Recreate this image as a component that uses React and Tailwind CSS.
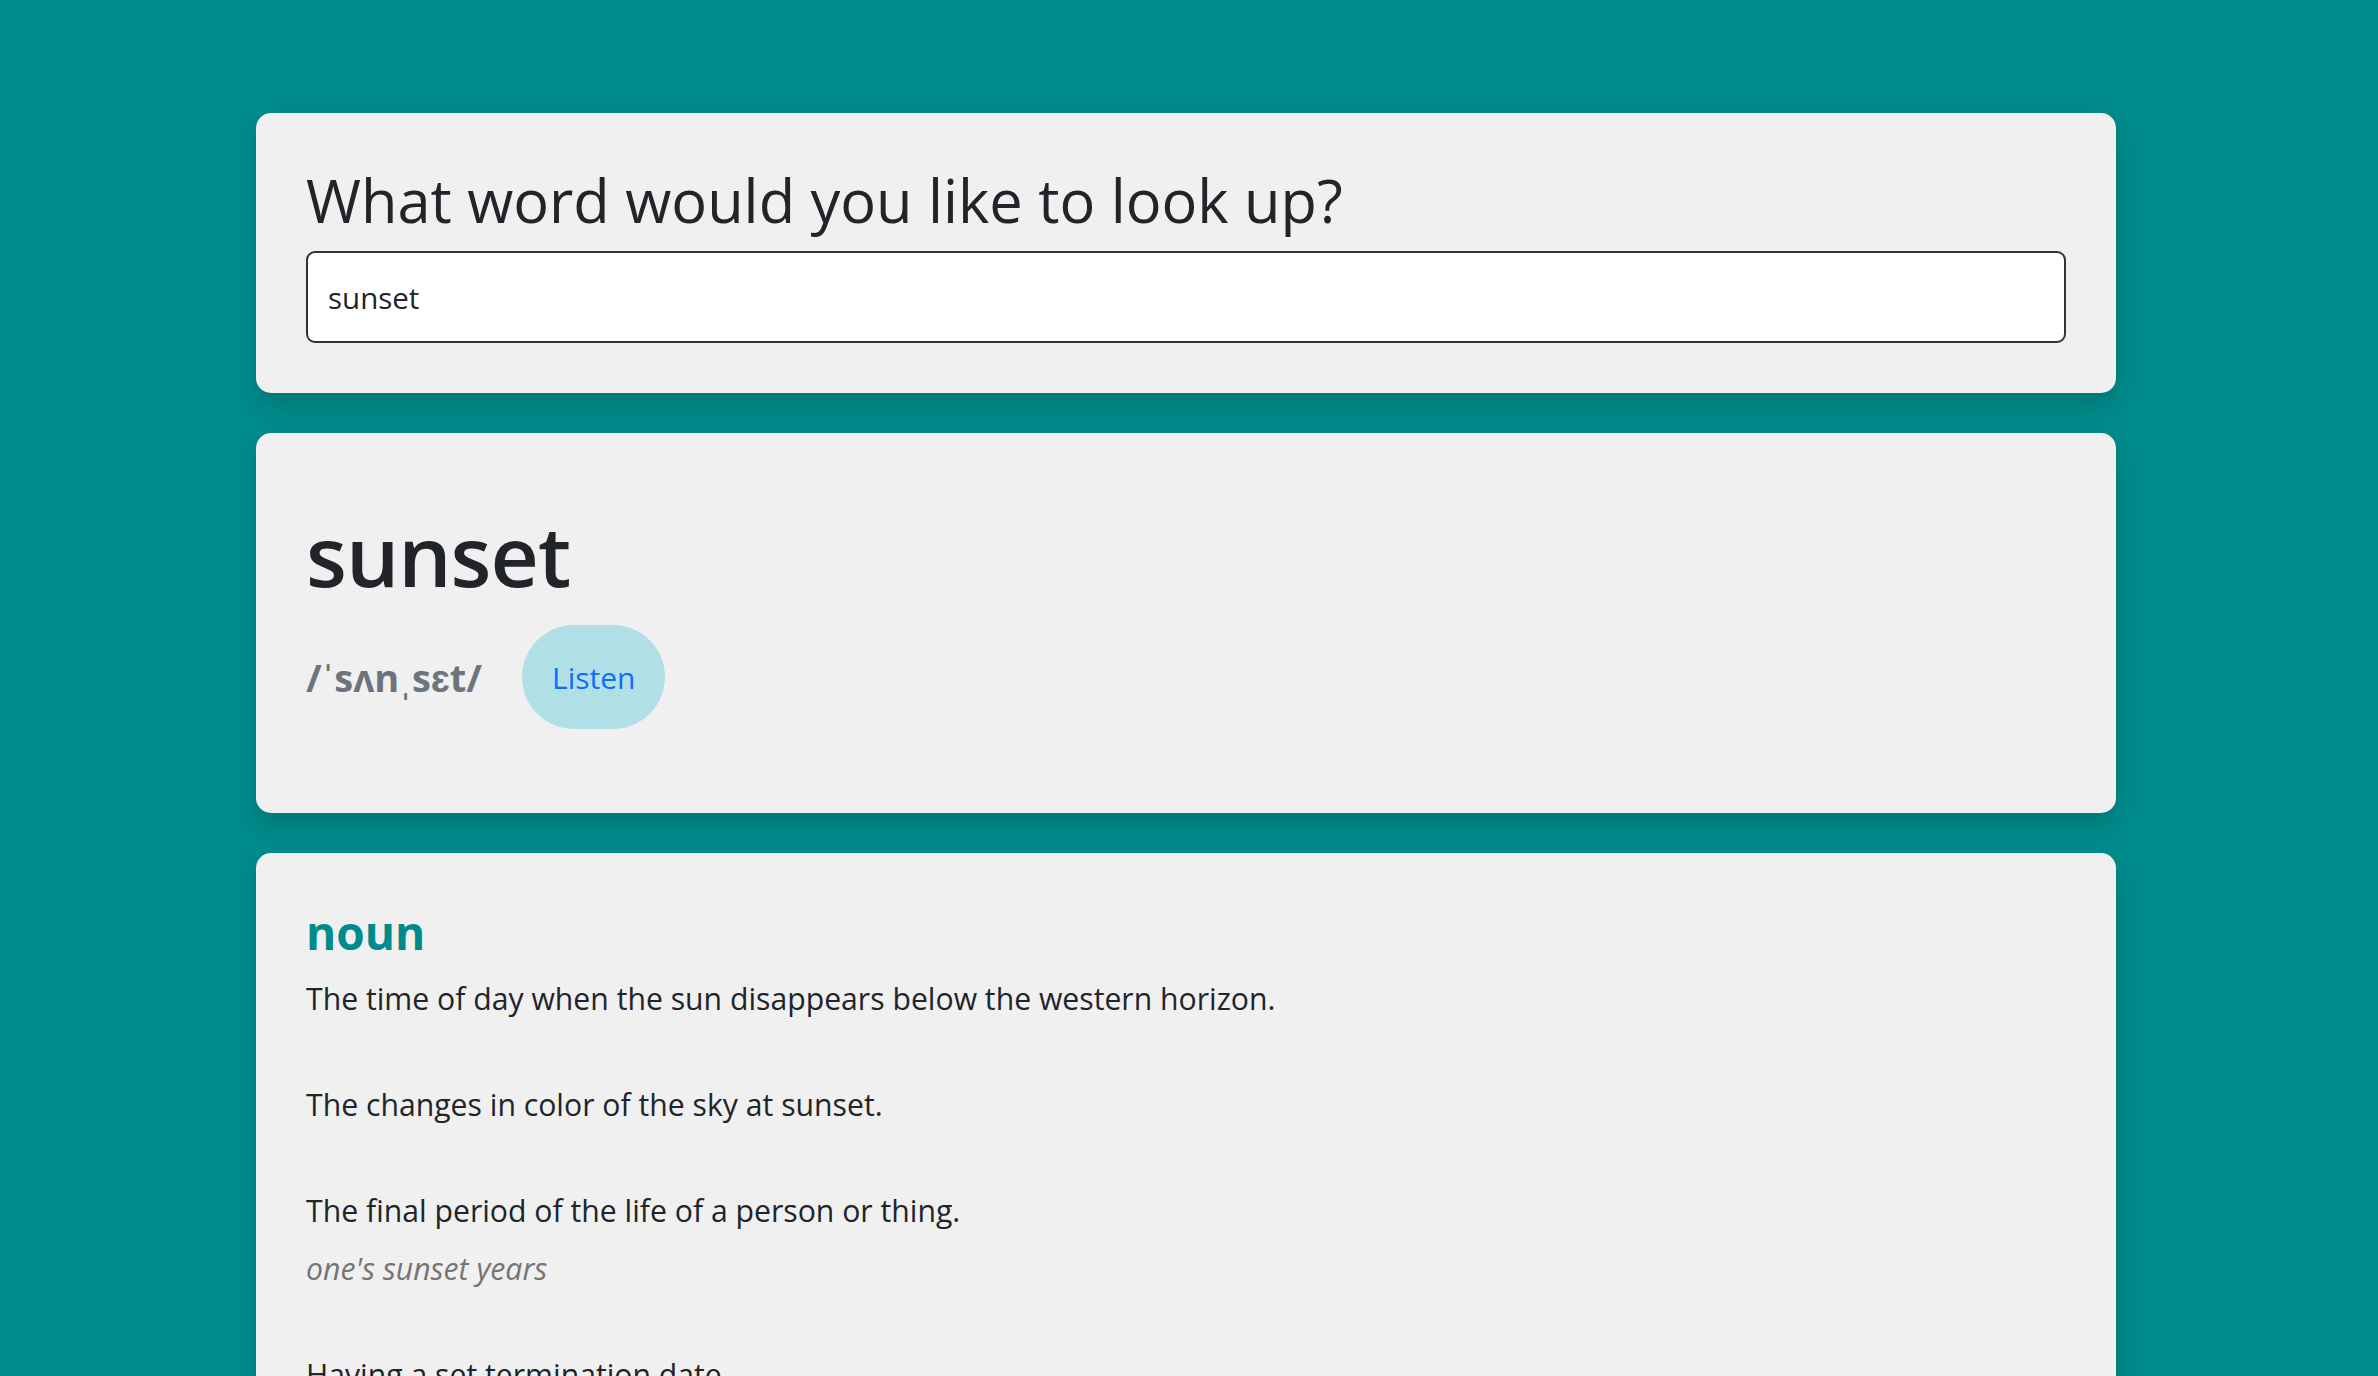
const definitions = [
  { text: 'The time of day when the sun disappears below the western horizon.' },
  { text: 'The changes in color of the sky at sunset.' },
  { text: 'The final period of the life of a person or thing.', example: "one's sunset years" },
  { text: 'Having a set termination date.' },
  { text: 'A provision of a law or regulation that causes it to expire at a set date.' },
]

function Card({ children, className = '' }) {
  return (
    <section className={`bg-[#f0f0f0] rounded-[15px] shadow-[0_12px_24px_rgba(0,0,0,0.15)] px-[50px] ${className}`}>
      {children}
    </section>
  )
}

export default function App() {
  return (
    <div className="min-h-screen bg-[#008b8b] pt-[113px] pb-[60px] text-[#212529] font-['Open_Sans',sans-serif]">
      <main className="ml-[256px] w-[1860px] flex flex-col gap-[40px]">
        {/* Search */}
        <Card className="pt-[51px] pb-[50px]">
          <h1 className="text-[59.5px] leading-[72px] font-medium mb-[15px]">
            What word would you like to look up?
          </h1>
          <input
            type="search"
            defaultValue="sunset"
            className="w-full h-[92px] bg-white border-2 border-[#333] rounded-[9px] px-[20px] text-[29.5px] text-[#212529] outline-none"
          />
        </Card>

        {/* Word header */}
        <Card className="pt-[50px] pb-[84px]">
          <h2 className="text-[84px] leading-[108px] font-semibold tracking-[-1px] mt-[18px]">sunset</h2>
          <div className="flex items-center gap-[40px] mt-[16px]">
            <span className="text-[38px] font-bold text-[#6c757d]">/ˈsʌnˌsɛt/</span>
            <button className="h-[104px] px-[30px] rounded-full bg-[#b0e0e6] text-[#0d6efd] text-[30px]">
              Listen
            </button>
          </div>
        </Card>

        {/* Meanings */}
        <Card className="pt-[50px] pb-[50px]">
          <h3 className="text-[46px] leading-[58px] font-bold text-[#008b8b] mb-[13px]">noun</h3>
          <div className="flex flex-col gap-[56px]">
            {definitions.map((d) => (
              <div key={d.text}>
                <p className="text-[30.2px] leading-[50px]">{d.text}</p>
                {d.example && (
                  <p className="text-[30.2px] leading-[50px] italic text-[#757575] mt-[8px]">{d.example}</p>
                )}
              </div>
            ))}
          </div>
        </Card>
      </main>
    </div>
  )
}
